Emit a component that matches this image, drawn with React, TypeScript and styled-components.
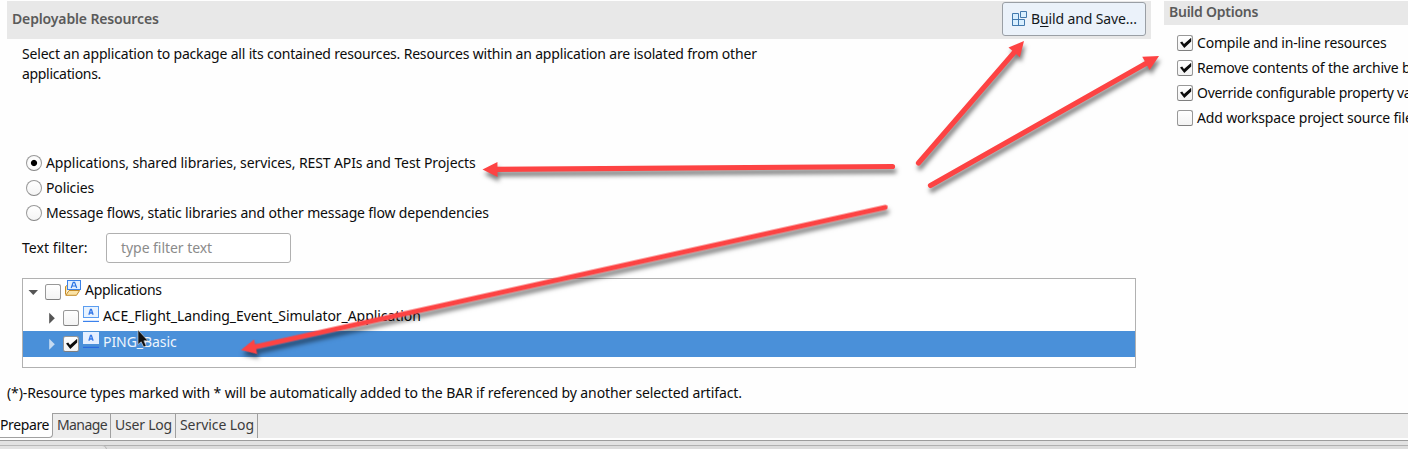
import React from 'react';
import styled, { createGlobalStyle } from 'styled-components';

const GlobalStyle = createGlobalStyle`
  * { box-sizing: border-box; }
  body {
    margin: 0;
    overflow: hidden;
    background: #fefefe;
    color: #0c0c0c;
    font: 14px/20px "Noto Sans", "Open Sans", sans-serif;
  }
`;

const Page = styled.div`
  position: relative;
  display: flex;
  flex-direction: column;
  width: 1408px;
  height: 449px;
  overflow: hidden;
`;

const Main = styled.div`
  display: flex;
  flex: none;
  gap: 13px;
  height: 413px;
  padding: 1px 0 0 7px;
`;

const Resources = styled.section`
  display: flex;
  flex-direction: column;
  width: 1144px;
  flex: none;
`;

const Options = styled.section`
  flex: 1;
  min-width: 0;
  overflow: hidden;
`;

const SectionHeader = styled.header<{ $height: number }>`
  display: flex;
  align-items: center;
  justify-content: space-between;
  height: ${p => p.$height}px;
  padding: 0 5px 2px;
  background: #e8e8e8;
`;

const Text = styled.span<{ $spacing?: number }>`
  white-space: pre;
  letter-spacing: ${p => p.$spacing ?? 0}px;
`;

const Title = styled(Text)`
  color: #5a5a5a;
  font-weight: 600;
`;

const BuildButton = styled.button`
  display: flex;
  align-items: center;
  gap: 3px;
  width: 144px;
  height: 34px;
  padding: 0 0 0 9px;
  border: 1px solid #9a9fa5;
  border-radius: 3px;
  background: #ebf2fa;
  color: #14181c;
  font: inherit;
  u { text-underline-offset: 2px; }
`;

const Intro = styled.p`
  display: flex;
  flex-direction: column;
  margin: 5px 0 0 15px;
`;

const RadioGroup = styled.div`
  display: flex;
  flex-direction: column;
  gap: 5px;
  margin: 69px 0 0 19px;
`;

const ChoiceRow = styled.label`
  display: flex;
  align-items: center;
  gap: 4px;
  height: 20px;
`;

const Radio = styled.span<{ $on?: boolean }>`
  flex: none;
  width: 16px;
  height: 16px;
  border: 1px solid #999;
  border-bottom-color: #858585;
  border-radius: 50%;
  background: ${p => (p.$on ? 'radial-gradient(circle, #000 0 2.6px, #fff 3.6px, #f3f3f3)' : 'linear-gradient(#fff, #f4f4f4)')};
`;

const CheckFrame = styled.span`
  display: flex;
  flex: none;
  width: 16px;
  height: 16px;
  border: 1px solid #989898;
  border-bottom-color: #7f7f7f;
  border-radius: 2.5px;
  background: linear-gradient(#fff, #f3f3f3);
`;

const FilterRow = styled.div`
  display: flex;
  align-items: center;
  height: 30px;
  margin: 10px 0 0 15px;
`;

const FilterLabel = styled(Text)`
  width: 84px;
`;

const FilterInput = styled.div`
  width: 185px;
  height: 30px;
  padding: 4px 14px;
  border: 1px solid #b0b0b0;
  border-radius: 3px;
  background: #fff;
  color: #8b8b8b;
`;

const Tree = styled.div`
  width: 1114px;
  height: 90px;
  margin: 15px 0 0 15px;
  border: 1px solid #b1b1b1;
  background: #fff;
`;

const TreeRow = styled.div<{ $depth: number; $selected?: boolean }>`
  display: flex;
  align-items: center;
  height: 26px;
  padding-left: ${p => 4 + p.$depth * 18}px;
  background: ${p => (p.$selected ? '#4a90d9' : 'transparent')};
  color: ${p => (p.$selected ? '#eef5fc' : 'inherit')};
`;

const Expander = styled.svg`
  flex: none;
  margin-right: 4px;
`;

const NodeIcon = styled.svg`
  flex: none;
  align-self: flex-start;
  margin: 1px 4px 0 4px;
`;

const NodeLabel = styled(Text)`
  padding-bottom: 4px;
`;

const Footnote = styled.div`
  margin-top: 15px;
`;

const OptionList = styled.div`
  display: flex;
  flex-direction: column;
  gap: 5px;
  margin: 8px 0 0 13px;
`;

const TabBar = styled.nav`
  display: flex;
  height: 25px;
  flex: none;
  border-top: 1px solid #a0a0a0;
  background: #ededed;
`;

const Tab = styled.div<{ $width: number; $active?: boolean }>`
  width: ${p => p.$width}px;
  height: ${p => (p.$active ? 25 : 24)}px;
  margin-top: ${p => (p.$active ? -1 : 0)}px;
  padding: ${p => (p.$active ? '2px 0 0' : '1px 0 0 4px')};
  border-right: 1px solid #a0a0a0;
  border-bottom: ${p => (p.$active ? '1px solid #a0a0a0' : '0')};
  border-bottom-right-radius: ${p => (p.$active ? 4 : 0)}px;
  background: ${p => (p.$active ? '#fefefe' : 'transparent')};
  color: ${p => (p.$active ? '#0c0c0c' : '#3c3c3c')};
`;

const LowerPane = styled.footer`
  flex: 1;
  margin-top: 2px;
  border-top: 1px solid #9c9c9c;
  background: #e2e2e2;
  padding-top: 4px;
`;

const LowerTabs = styled.div`
  height: 6px;
  border-top: 1px solid #b0b0b0;
  background: #dcdcdc;
`;

const LowerTab = styled.div`
  width: 107px;
  height: 6px;
  margin-top: -1px;
  border-top: 1px solid #b8b8b8;
  border-right: 1px solid #b0b0b0;
  border-top-right-radius: 5px;
  background: #e2e2e2;
`;

const Overlay = styled.svg`
  position: absolute;
  inset: 0;
  pointer-events: none;
`;

function Check({ on }: { on?: boolean }) {
  return (
    <CheckFrame>
      {on && (
        <svg width="14" height="14" viewBox="0 0 14 14">
          <path d="M2 6.4 L4.2 5.4 L6 8 L13.2 1.8 V5.4 L6.3 12 Z" fill="#0c0c0c" />
        </svg>
      )}
    </CheckFrame>
  );
}

function Arrow({ open, light }: { open?: boolean; light?: boolean }) {
  return (
    <Expander width="14" height="16" viewBox="0 0 14 16">
      <path d={open ? 'M1.5 6 H11 L6.3 11 Z' : 'M4.2 2.8 L9.8 8.3 L4.2 13.8 Z'} fill={light ? '#c5dbf2' : '#555'} />
    </Expander>
  );
}

function AppBadge({ folder, light }: { folder?: boolean; light?: boolean }) {
  if (folder) {
    return (
      <NodeIcon width="16" height="16" viewBox="0 0 16 16">
        <path d="M.5 14.5 V6.5 L2 5.5 H5 M.8 15.3 L4 10.5 H14.6 L11.5 15.3 Z" fill="#fbe3a6" stroke="#c48a25" />
        <rect x="2.5" y=".5" width="13" height="9" fill="#e3f0ff" stroke="#3b82e8" />
        <path d="M6.2 8 L8.2 2.4 H9.6 L11.7 8 M7.2 6 H10.8" fill="none" stroke="#2873e5" strokeWidth="1.2" />
      </NodeIcon>
    );
  }
  return (
    <NodeIcon width="16" height="16" viewBox="0 0 16 16">
      <rect x=".5" y=".5" width="15" height="11" fill={light ? '#e4efff' : '#e8f3ff'} stroke={light ? '#e4efff' : '#5b9df0'} />
      <path d="M5.9 8.8 L7.5 3.5 H8.4 L10.1 8.8 M6.6 7 H9.5" fill="none" stroke="#3478e8" strokeWidth="1.3" />
      <path d="M0 13.5 H16" stroke={light ? '#4a90d9' : '#fff'} strokeWidth="2" />
      <path d="M0 15.4 H16" stroke={light ? '#286be0' : '#3b82ed'} strokeWidth="1.2" />
    </NodeIcon>
  );
}

const pointers = [
  { from: [892.5, 166.5], to: [482.5, 169.5] },
  { from: [918.5, 163], to: [1024, 41] },
  { from: [930.5, 185.5], to: [1159, 56] },
  { from: [885, 207.5], to: [241, 350] },
];

function Pointer({ from, to }: { from: number[]; to: number[] }) {
  const dx = to[0] - from[0];
  const dy = to[1] - from[1];
  const length = Math.hypot(dx, dy);
  const angle = (Math.atan2(dy, dx) * 180) / Math.PI;
  return (
    <g transform={`translate(${from[0]} ${from[1]}) rotate(${angle})`}>
      <path d={`M0 0 H${length - 12}`} stroke="#fd4343" strokeWidth="5.2" strokeLinecap="round" />
      <path d={`M${length - 15} -7.5 L${length} 0 L${length - 15} 7.5 Z`} fill="#fd4343" />
    </g>
  );
}

export default function App() {
  return (
    <Page>
      <GlobalStyle />
      <Main>
        <Resources>
          <SectionHeader $height={38}>
            <Title $spacing={-0.14}>Deployable Resources</Title>
            <BuildButton>
              <svg width="16" height="16" viewBox="0 0 16 16" fill="#d9efff" stroke="#4379ad">
                <path d="M.5 2.5 H6.5 V14.5 H.5 Z M.5 8.5 H12.5 V14.5 H.5 M6.5 8.5 V14.5 M8.5 .5 H14.5 V6.5 H8.5 Z" />
              </svg>
              <Text $spacing={-0.12}>B<u>u</u>ild and Save...</Text>
            </BuildButton>
          </SectionHeader>
          <Intro>
            <Text $spacing={-0.185}>Select an application to package all its contained resources. Resources within an application are isolated from other</Text>
            <Text $spacing={-0.32}>applications.</Text>
          </Intro>
          <RadioGroup>
            <ChoiceRow><Radio $on /><Text $spacing={-0.1}>Applications, shared libraries, services, REST APIs and Test Projects</Text></ChoiceRow>
            <ChoiceRow><Radio /><Text $spacing={-0.14}>Policies</Text></ChoiceRow>
            <ChoiceRow><Radio /><Text $spacing={-0.15}>Message flows, static libraries and other message flow dependencies</Text></ChoiceRow>
          </RadioGroup>
          <FilterRow>
            <FilterLabel $spacing={0.05}>Text filter:</FilterLabel>
            <FilterInput><Text $spacing={-0.05}>type filter text</Text></FilterInput>
          </FilterRow>
          <Tree>
            <TreeRow $depth={0}>
              <Arrow open /><Check /><AppBadge folder />
              <NodeLabel $spacing={-0.32}>Applications</NodeLabel>
            </TreeRow>
            <TreeRow $depth={1}>
              <Arrow /><Check /><AppBadge />
              <NodeLabel $spacing={-0.06}>ACE_Flight_Landing_Event_Simulator_Application</NodeLabel>
            </TreeRow>
            <TreeRow $depth={1} $selected>
              <Arrow light /><Check on /><AppBadge light />
              <NodeLabel $spacing={-0.05}>PING_Basic</NodeLabel>
            </TreeRow>
          </Tree>
          <Footnote>
            <Text $spacing={-0.115}>(*)-Resource types marked with * will be automatically added to the BAR if referenced by another selected artifact.</Text>
          </Footnote>
        </Resources>
        <Options>
          <SectionHeader $height={24}><Title $spacing={-0.25}>Build Options</Title></SectionHeader>
          <OptionList>
            <ChoiceRow><Check on /><Text $spacing={-0.18}>Compile and in-line resources</Text></ChoiceRow>
            <ChoiceRow><Check on /><Text $spacing={-0.18}>Remove contents of the archive b</Text></ChoiceRow>
            <ChoiceRow><Check on /><Text $spacing={-0.28}>Override configurable property va</Text></ChoiceRow>
            <ChoiceRow><Check /><Text $spacing={-0.16}>Add workspace project source file</Text></ChoiceRow>
          </OptionList>
        </Options>
      </Main>
      <TabBar>
        <Tab $width={53} $active><Text $spacing={-0.39}>Prepare</Text></Tab>
        <Tab $width={58}><Text $spacing={-0.59}>Manage</Text></Tab>
        <Tab $width={65}><Text $spacing={-0.21}>User Log</Text></Tab>
        <Tab $width={82}><Text $spacing={-0.07}>Service Log</Text></Tab>
      </TabBar>
      <LowerPane>
        <LowerTabs><LowerTab /></LowerTabs>
      </LowerPane>
      <Overlay width="1408" height="449" viewBox="0 0 1408 449">
        <defs>
          <filter id="cast" x="0" y="0" width="1408" height="449" filterUnits="userSpaceOnUse" colorInterpolationFilters="sRGB">
            <feDropShadow dx="1.5" dy="4.5" stdDeviation="2" floodColor="#000" floodOpacity=".5" />
          </filter>
        </defs>
        <g filter="url(#cast)">
          {pointers.map((p, i) => <Pointer key={i} {...p} />)}
        </g>
        <path d="M138 330 V344.5 L141.2 341.8 L143.7 347 L146.2 345.8 L143.9 340.8 H148 Z" fill="#101010" stroke="#ddd" strokeWidth=".6" />
      </Overlay>
    </Page>
  );
}
